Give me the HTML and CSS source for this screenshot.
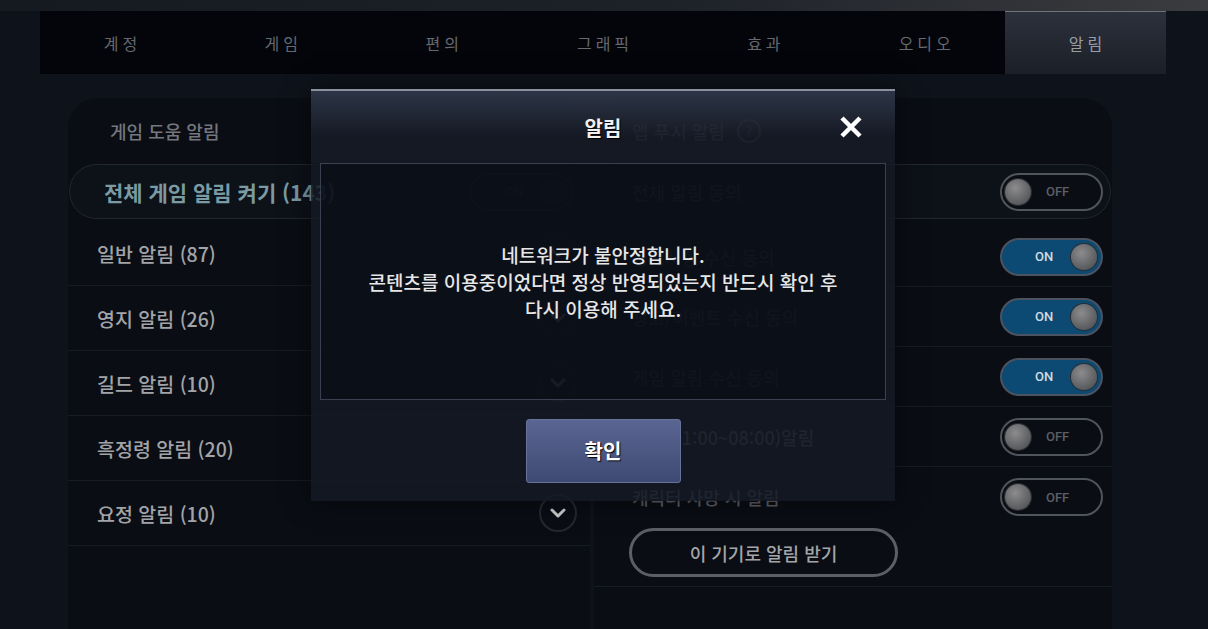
FILE: index.html
```html
<!DOCTYPE html>
<html lang="ko">
<head>
  <meta charset="UTF-8" />
  <title>설정 - 알림</title>
  <link rel="stylesheet" href="styles.css">
</head>
<body>

  <div class="topbar"></div>

  <nav class="tabs">
    <div class="tab">계정</div>
    <div class="tab">게임</div>
    <div class="tab">편의</div>
    <div class="tab">그래픽</div>
    <div class="tab">효과</div>
    <div class="tab">오디오</div>
    <div class="tab active">알림</div>
  </nav>

  <div class="main">
    <section class="panel panel-left">
      <div class="panel-head">게임 도움 알림</div>
      <div class="pill">
        <span class="pill-title">전체 게임 알림 켜기 (143)</span>
        <span class="toggle on dim"><span class="toggle-label">ON</span><span class="knob"></span></span>
      </div>
      <div class="row"><span>일반 알림 (87)</span><span class="chevron"><svg width="34" height="34" viewBox="0 0 34 34"><polyline points="11,14 17,20 23,14" /></svg></span></div>
      <div class="row"><span>영지 알림 (26)</span><span class="chevron"><svg width="34" height="34" viewBox="0 0 34 34"><polyline points="11,14 17,20 23,14" /></svg></span></div>
      <div class="row"><span>길드 알림 (10)</span><span class="chevron"><svg width="34" height="34" viewBox="0 0 34 34"><polyline points="11,14 17,20 23,14" /></svg></span></div>
      <div class="row"><span>흑정령 알림 (20)</span><span class="chevron"><svg width="34" height="34" viewBox="0 0 34 34"><polyline points="11,14 17,20 23,14" /></svg></span></div>
      <div class="row"><span>요정 알림 (10)</span><span class="chevron"><svg width="34" height="34" viewBox="0 0 34 34"><polyline points="11,14 17,20 23,14" /></svg></span></div>
    </section>

    <section class="panel panel-right">
      <div class="panel-head">앱 푸시 알림 <span class="help">?</span></div>
      <div class="pill">
        <span class="pill-title">전체 알림 동의</span>
        <span class="toggle off"><span class="knob"></span><span class="toggle-label">OFF</span></span>
      </div>
      <div class="row"><span>공지사항 수신 동의</span><span class="toggle on"><span class="toggle-label">ON</span><span class="knob"></span></span></div>
      <div class="row"><span>광고/이벤트 수신 동의</span><span class="toggle on"><span class="toggle-label">ON</span><span class="knob"></span></span></div>
      <div class="row"><span>게임 알림 수신 동의</span><span class="toggle on"><span class="toggle-label">ON</span><span class="knob"></span></span></div>
      <div class="row"><span>야간(21:00~08:00)알림</span><span class="toggle off"><span class="knob"></span><span class="toggle-label">OFF</span></span></div>
      <div class="row last"><span>캐릭터 사망 시 알림</span><span class="toggle off"><span class="knob"></span><span class="toggle-label">OFF</span></span></div>
      <div class="device-block">
        <button class="device-btn">이 기기로 알림 받기</button>
      </div>
    </section>
  </div>

  <div class="modal">
    <div class="modal-head">
      <span></span>
      <span class="modal-title">알림</span>
      <span class="modal-close">
        <svg width="24" height="24" viewBox="0 0 24 24"><path d="M3 3 L21 21 M21 3 L3 21" /></svg>
      </span>
    </div>
    <div class="modal-body">
      <p>네트워크가 불안정합니다.<br>콘텐츠를 이용중이었다면 정상 반영되었는지 반드시 확인 후<br>다시 이용해 주세요.</p>
    </div>
    <div class="modal-foot">
      <button class="btn-ok">확인</button>
    </div>
  </div>

</body>
</html>
```

FILE: styles.css
```css
body {
  margin: 0;
  width: 1208px;
  height: 629px;
  overflow: hidden;
  position: relative;
  background: #0e121a;
  font-family: "Noto Sans CJK KR", "Noto Sans", sans-serif;
}

.topbar {
  height: 11px;
  background: linear-gradient(90deg, #151920 0%, #1d2128 55%, #3b3c3f 100%);
}

/* tab bar */
.tabs {
  display: flex;
  margin-left: 40px;
  width: 1126px;
  height: 63px;
  background: #04050a;
}

.tab {
  flex: 1;
  display: flex;
  align-items: center;
  justify-content: center;
  font-size: 16px;
  color: #66696f;
  letter-spacing: 4px;
  padding-left: 4px;
}

.tab.active {
  background: linear-gradient(#2c313c, #1b1f27);
  box-shadow: inset 0 1px 0 #6e727a;
  color: #9a9da2;
}

/* panels */
.main {
  display: flex;
  gap: 4px;
  margin: 24px 0 0 68px;
  width: 1044px;
}

.panel {
  background: #0a0d14;
  border-radius: 30px;
  height: 560px;
}

.panel-left {
  width: 522px;
}

.panel-right {
  width: 518px;
}

.panel-head {
  height: 66px;
  display: flex;
  align-items: center;
  padding-left: 42px;
  font-size: 18px;
  font-weight: 500;
  color: #74777d;
}

.panel-right .panel-head {
  padding-left: 38px;
  gap: 12px;
  color: #5a5e65;
}

.help {
  width: 20px;
  height: 20px;
  border: 2px solid #4a4e55;
  border-radius: 50%;
  font-size: 14px;
  display: flex;
  align-items: center;
  justify-content: center;
}

.pill {
  height: 55px;
  box-sizing: border-box;
  border: 1px solid #22262e;
  border-radius: 28px;
  background: #0d1118;
  display: flex;
  align-items: center;
  justify-content: space-between;
  padding: 0 16px 0 34px;
  margin-left: 1px;
}

.pill-title {
  font-size: 21px;
  font-weight: 700;
  color: #7a9aa4;
}

.panel-right .pill {
  margin-left: 2px;
  margin-right: 1px;
  padding: 0 7px 0 35px;
}

.panel-right .pill-title {
  font-weight: 500;
  font-size: 18px;
  color: #5a5e65;
}

.row {
  height: 65px;
  box-sizing: border-box;
  border-bottom: 1px solid #171b22;
  display: flex;
  align-items: center;
  justify-content: space-between;
  padding: 0 13px 0 29px;
  font-size: 19.5px;
  font-weight: 500;
  color: #a2a4a8;
}

.panel-left .pill + .row {
  margin-top: 2px;
}

.panel-right .row {
  height: 60px;
  padding: 0 9px 0 38px;
  font-size: 18px;
  color: #5a5e65;
}

.panel-right .pill + .row {
  margin-top: 8px;
}

.panel-right .row.last {
  border-bottom: none;
}

.chevron {
  width: 34px;
  height: 34px;
  border: 2px solid #25282f;
  border-radius: 50%;
  display: flex;
}

.chevron polyline {
  fill: none;
  stroke: #cdcdcd;
  stroke-width: 3;
  stroke-linecap: round;
  stroke-linejoin: round;
}

/* switches */
.toggle {
  width: 103px;
  height: 38px;
  box-sizing: border-box;
  border: 2px solid #50545b;
  border-radius: 19px;
  display: flex;
  align-items: center;
  font-family: Roboto, "Noto Sans", sans-serif;
  font-size: 13px;
  font-weight: 500;
}

.toggle.off {
  background: #0a0d13;
  padding-left: 3px;
  color: #5b5f66;
}

.toggle.off .toggle-label {
  margin-left: 15px;
}

.toggle.on {
  background: #0c4a73;
  border-color: #4b5360;
  justify-content: space-between;
  padding: 0 4px 0 33px;
  color: #d4dae0;
}

.toggle.dim {
  background: #10141b;
  border-color: #2a2e36;
  color: #3c4048;
}

.knob {
  width: 26px;
  height: 26px;
  border-radius: 50%;
  background: radial-gradient(circle at 40% 35%, #8c8c8e, #5a5b5e 70%, #47484b);
  box-shadow: 0 0 0 1px #2a2c30;
}

.toggle.dim .knob {
  background: #1c2027;
}

.device-block {
  height: 60px;
  box-sizing: border-box;
  padding: 1px 0 0 35px;
  border-bottom: 1px solid #171b22;
}

.device-btn {
  width: 269px;
  height: 49px;
  border: 3px solid #5c5f64;
  border-radius: 25px;
  background: transparent;
  color: #a3a5a9;
  font-family: "Noto Sans CJK KR", sans-serif;
  font-size: 18px;
  font-weight: 500;
}

/* popup */
.modal {
  position: absolute;
  left: 311px;
  top: 89px;
  width: 584px;
  height: 412px;
  box-sizing: border-box;
  background: rgba(20, 25, 36, 0.84);
  border-top: 2px solid #8a909c;
  box-shadow: 0 0 24px rgba(0, 0, 0, 0.5);
  display: flex;
  flex-direction: column;
}

.modal-head {
  height: 72px;
  display: grid;
  grid-template-columns: 1fr auto 1fr;
  align-items: center;
  background: linear-gradient(rgba(50, 58, 76, 0.85), rgba(24, 29, 40, 0.3) 65%);
}

.modal-title {
  font-size: 20px;
  font-weight: 700;
  color: #f0f0f0;
  text-shadow: 1px 1px 1px #000;
}

.modal-close {
  justify-self: end;
  margin-right: 32px;
  display: flex;
}

.modal-close path {
  stroke: #fff;
  stroke-width: 4.5;
  fill: none;
}

.modal-body {
  margin: 0 9px;
  height: 237px;
  box-sizing: border-box;
  border: 1px solid #39404f;
  background: rgba(6, 10, 18, 0.6);
  display: flex;
  align-items: center;
  justify-content: center;
  text-align: center;
  font-size: 19px;
  font-weight: 500;
  line-height: 27px;
  color: #e6e6e6;
}

.modal-body p {
  margin: 0;
}

.modal-foot {
  flex: 1;
  display: flex;
  align-items: center;
  justify-content: center;
}

.btn-ok {
  width: 155px;
  height: 64px;
  border: 1px solid #66739c;
  border-radius: 3px;
  background: linear-gradient(#5a6692, #3e4a73);
  color: #fff;
  font-family: "Noto Sans CJK KR", sans-serif;
  font-size: 20px;
  font-weight: 700;
  text-shadow: 1px 1px 1px #000;
}
```
